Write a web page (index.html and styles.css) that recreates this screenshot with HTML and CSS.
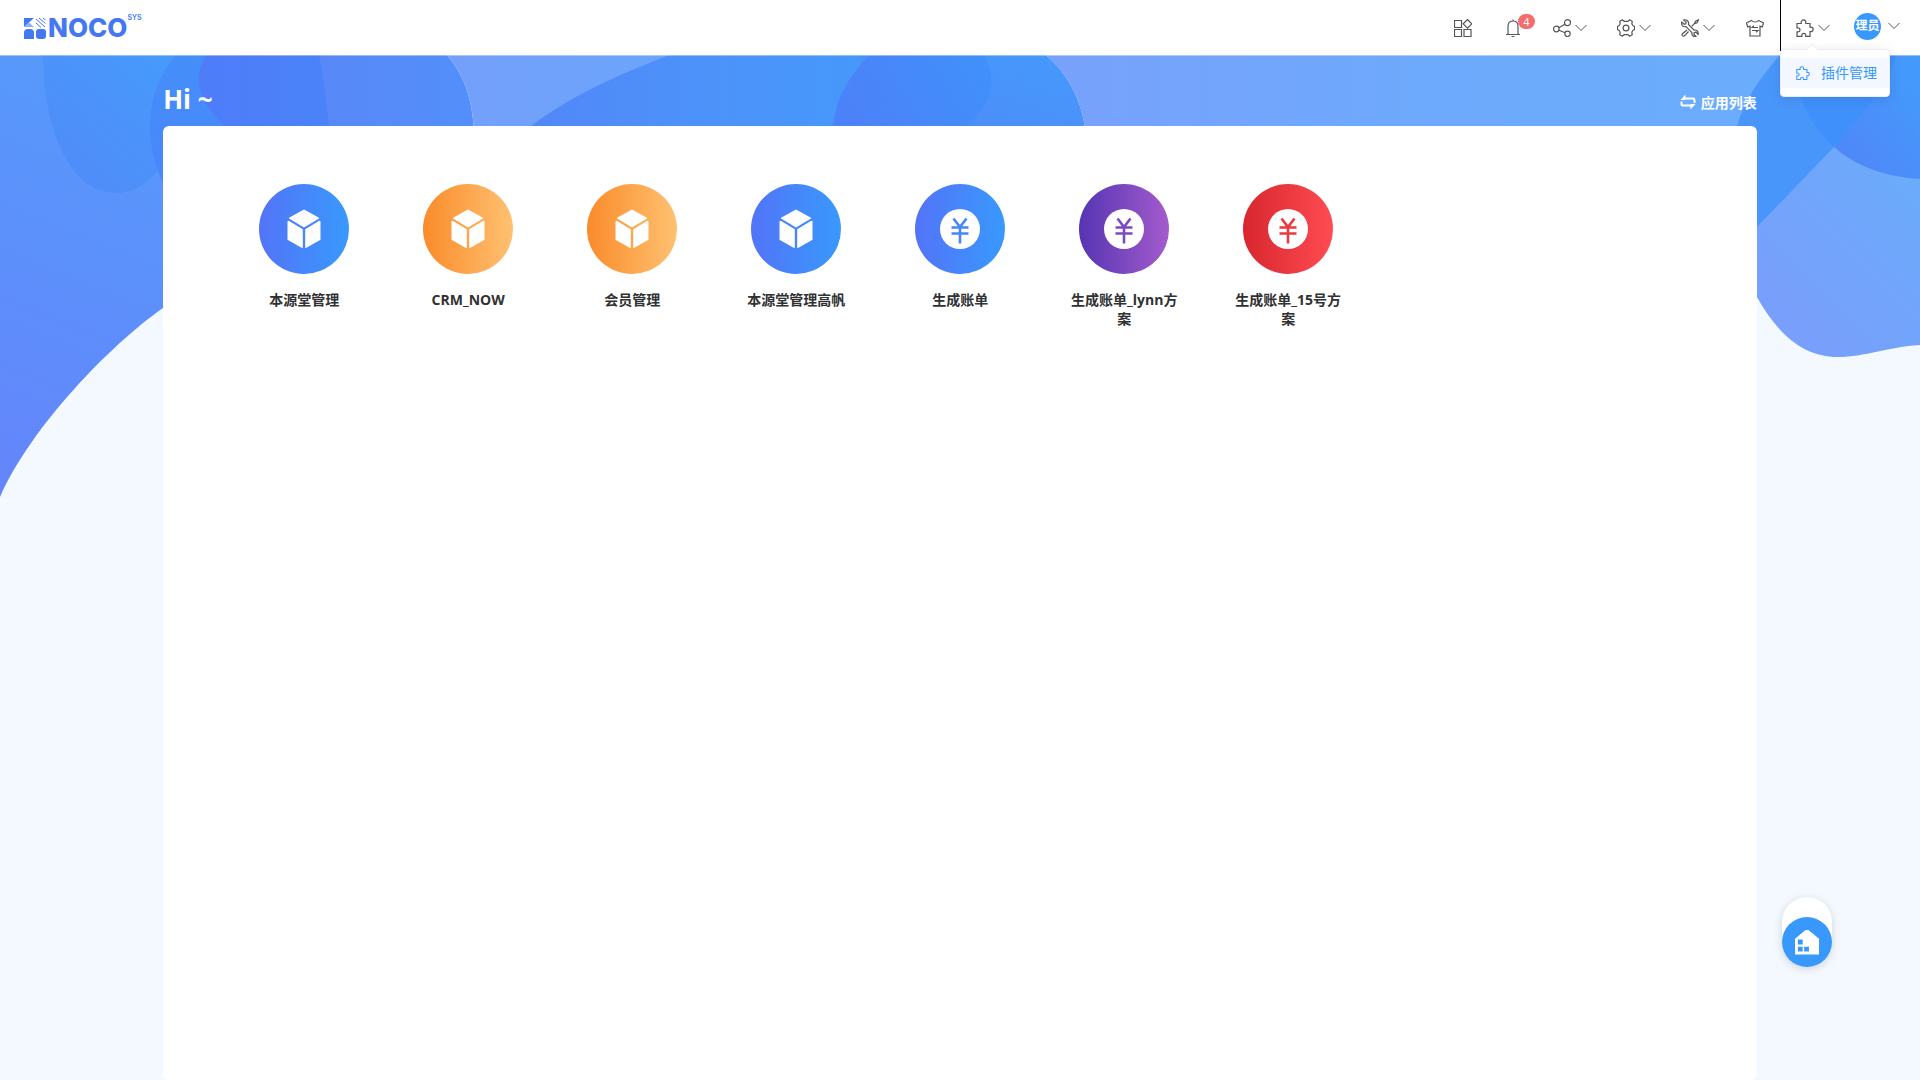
FILE: index.html
```html
<!DOCTYPE html>
<html lang="zh-CN">
<head>
    <meta charset="UTF-8">
    <meta name="viewport" content="width=device-width, initial-scale=1.0">
    <title>NOCO SYS</title>
    <link rel="stylesheet" href="styles.css">
</head>
<body>
    <!-- icons shared by several places -->
    <svg class="sprite" aria-hidden="true">
        <symbol id="arrow" viewBox="0 0 12 8">
            <path d="M.5 1l5.500 5.500L11.500 1"/>
        </symbol>
        <symbol id="puzzle" viewBox="0 0 18 18">
            <path d="M1 4.500h4.200V3.200a2.300 2.300 0 0 1 4.600 0v1.300H14v3.700h1a2.200 2.200 0 0 1 0 4.400h-1v4.700H9.700v-1a1.900 1.900 0 0 0-3.800 0v1H1v-4.400h1a2 2 0 0 0 0-4H1z"/>
        </symbol>
        <symbol id="cube" viewBox="0 0 34 40">
            <path d="M17 .5L32 8.800v.8L17 18.600 2 9.600v-.8z"/>
            <path d="M.5 12.200l1.200-.4L15.800 20.300v18.500l-.8.2L.5 30.700z"/>
            <path d="M33.500 12.200l-1.200-.4L18.200 20.300v18.500l.8.2L33.500 30.700z"/>
        </symbol>
        <symbol id="yen" viewBox="0 0 40 40">
            <circle cx="20" cy="20" r="20"/>
            <path class="yen_line" d="M13.500 9.500l6.500 8.500 6.500-8.500M20 18v16.500M11.500 18.500h17M11.500 24.500h17"/>
        </symbol>
    </svg>

    <header class="header">
        <a class="logo" href="#">
            <svg class="logo_mark" viewBox="0 0 22 22" aria-hidden="true">
                <path d="M0 1h10L0 10z"/>
                <path class="logo_light" d="M5 5.500L10 10H0z"/>
                <path class="logo_stripe" d="M12 6l5 4.500M12 2l9 8M15 1l6.500 5.500M19 1l2.500 2"/>
                <path d="M0 22v-6a4 4 0 0 1 4-4h2a4 4 0 0 1 4 4v6z"/>
                <rect x="12" y="12" width="10" height="10" rx="3"/>
            </svg>
            <span class="logo_text">NOCO</span>
            <span class="logo_sub">SYS</span>
        </a>

        <nav class="tools">
            <button class="tool single" type="button" aria-label="apps">
                <svg class="icon" viewBox="0 0 18 18">
                    <path d="M.5 1.500h7v7h-7zM.5 10.500h7v7h-7zM10 10.500h7v7h-7zM13.500.5l4.300 4.300-4.300 4.300-4.300-4.300z"/>
                </svg>
            </button>
            <button class="tool single" type="button" aria-label="messages">
                <svg class="icon" viewBox="0 0 18 18">
                    <path d="M2 15.500h14M4 15.500V7.200C4 4 6 2 9 2s5 2 5 5.200v8.300M9 2V.5M7.500 17.500h3"/>
                </svg>
                <span class="badge">4</span>
            </button>
            <button class="tool" type="button" aria-label="share">
                <svg class="icon" viewBox="0 0 18 18">
                    <circle cx="3.300" cy="10" r="2.800"/>
                    <circle cx="14.500" cy="3.700" r="3"/>
                    <circle cx="14.500" cy="14.800" r="2.700"/>
                    <path d="M5.800 8.700l6.100-3.400M5.900 11.200l6.200 2.600"/>
                </svg>
                <svg class="arrow"><use href="#arrow"/></svg>
            </button>
            <button class="tool" type="button" aria-label="settings">
                <svg class="icon" viewBox="0 0 18 18">
                    <path d="M5.300.8L7 2.300h4L12.700.8l2.600 1.600-.5 2.400 1.200 2 1.500.6v3.200l-1.500.6-1.200 2 .5 2.400-2.600 1.600L11 15.700H7l-1.700 1.500-2.600-1.600.5-2.400-1.200-2-1.500-.6V7.400L2 6.800l1.200-2-.5-2.400z" stroke-linejoin="round"/>
                    <circle cx="9" cy="9" r="2.900"/>
                </svg>
                <svg class="arrow"><use href="#arrow"/></svg>
            </button>
            <button class="tool" type="button" aria-label="tools">
                <svg class="icon" viewBox="0 0 18 18">
                    <path d="M2.600 1l2.600 2.400-.4 1.400-1.500.5L.8 3.100C0 6.300 2 8.300 5 7.600l6 6c-.7 2.600 1.600 4.500 4 3.800l-2.100-2.300.4-1.500 1.600-.4 2.200 2.300c.6-3-1.300-4.900-4-4.400L7.500 5.500C8.300 2.500 5.500 0 2.600 1z"/>
                    <path d="M10.800 7.400L13.500 4.500l1-2.200 3-1.500L16 3.800l-2.200 1M6 11l-4.300 3.500c-.8.700-.8 1.500-.2 2.200.7.700 1.600.6 2.200-.1L7.500 12.500"/>
                </svg>
                <svg class="arrow"><use href="#arrow"/></svg>
            </button>
            <button class="tool single" type="button" aria-label="theme">
                <svg class="icon" viewBox="0 0 18 18">
                    <path d="M5.500 1.500c1.500 2 5.500 2 7 0L17.600 4l-1.400 4-2.200-.8v9.800H4V7.200L1.800 8 .4 4z"/>
                    <path d="M12 8.500H6l2-1.800M6 11.500h6l-2 1.800"/>
                </svg>
            </button>
            <div class="dropdown">
                <button class="tool" type="button" aria-label="plugins">
                    <svg class="icon"><use href="#puzzle"/></svg>
                    <svg class="arrow"><use href="#arrow"/></svg>
                </button>
                <div class="menu">
                    <a class="menu_item" href="#">
                        <svg class="menu_icon"><use href="#puzzle"/></svg>
                        插件管理
                    </a>
                </div>
            </div>
            <button class="user" type="button">
                <span class="avatar">理员</span>
                <svg class="arrow"><use href="#arrow"/></svg>
            </button>
        </nav>
    </header>

    <main class="main">
        <svg class="waves" viewBox="0 0 1920 445" aria-hidden="true">
            <defs>
                <linearGradient id="g_left" gradientUnits="userSpaceOnUse" x1="0" y1="430" x2="170" y2="0">
                    <stop offset="0" stop-color="#6485fb"/><stop offset="1" stop-color="#559bfb"/>
                </linearGradient>
                <linearGradient id="g_drop" gradientUnits="userSpaceOnUse" x1="70" y1="120" x2="170" y2="10">
                    <stop offset="0" stop-color="#508cf9"/><stop offset="1" stop-color="#469afb"/>
                </linearGradient>
                <linearGradient id="g_blob" gradientUnits="userSpaceOnUse" x1="155" y1="110" x2="200" y2="0">
                    <stop offset="0" stop-color="#4a87fa"/><stop offset="1" stop-color="#448ffa"/>
                </linearGradient>
                <linearGradient id="g_deep">
                    <stop offset="0" stop-color="#4f7cf9"/><stop offset="1" stop-color="#4a83f9"/>
                </linearGradient>
                <linearGradient id="g_mid">
                    <stop offset="0" stop-color="#5988f8"/><stop offset="1" stop-color="#528ffa"/>
                </linearGradient>
                <linearGradient id="g_pale">
                    <stop offset="0" stop-color="#749ffb"/><stop offset="1" stop-color="#6aa5fb"/>
                </linearGradient>
                <linearGradient id="g_hill">
                    <stop offset="0" stop-color="#5287f8"/><stop offset=".6" stop-color="#4b94fa"/><stop offset="1" stop-color="#4599fc"/>
                </linearGradient>
                <linearGradient id="g_ball" x1="0" y1=".3" x2="1" y2="0">
                    <stop offset="0" stop-color="#4c82f9"/><stop offset="1" stop-color="#3f91fb"/>
                </linearGradient>
                <linearGradient id="g_ring" x1="0" y1="1" x2="1" y2="0">
                    <stop offset="0" stop-color="#5089f8"/><stop offset="1" stop-color="#449afc"/>
                </linearGradient>
                <linearGradient id="g_sky">
                    <stop offset="0" stop-color="#78a1fb"/><stop offset=".5" stop-color="#6da9fc"/><stop offset="1" stop-color="#6badfc"/>
                </linearGradient>
                <linearGradient id="g_right" gradientUnits="userSpaceOnUse" x1="1760" y1="230" x2="1880" y2="110">
                    <stop offset="0" stop-color="#789ffb"/><stop offset="1" stop-color="#6caafb"/>
                </linearGradient>
                <linearGradient id="g_corner" gradientUnits="userSpaceOnUse" x1="1840" y1="100" x2="1920" y2="30">
                    <stop offset="0" stop-color="#5087f8"/><stop offset="1" stop-color="#449afc"/>
                </linearGradient>
            </defs>
            <path fill="url(#g_left)" d="M0 0H220V215L163 253C110 290 31 372 0 442Z"/>
            <path fill="url(#g_drop)" d="M43 0C43 70 68 138 116 138C132 138 146 130 157 117L190 0Z"/>
            <path fill="url(#g_blob)" d="M176 0C146 34 142 84 163 128H230V0Z"/>
            <path fill="url(#g_mid)" d="M315 0H447C464 20 473 44 474 80H322Z"/>
            <path fill="url(#g_deep)" d="M206 0C190 26 202 55 233 77H330C326 50 325 28 319 0Z"/>
            <path fill="url(#g_pale)" d="M447 0H680V80H474C473 44 464 20 447 0Z"/>
            <path fill="url(#g_hill)" d="M669 0H890V80H520C560 46 608 24 669 0Z"/>
            <path fill="url(#g_ring)" d="M860 0H1046C1068 19 1082 44 1086 80H860Z"/>
            <path fill="url(#g_ball)" d="M870 0H984C998 26 994 49 960 77H832C835 46 847 22 870 0Z"/>
            <path fill="url(#g_sky)" d="M1046 0H1800V80H1086C1082 44 1068 19 1046 0Z"/>
            <path fill="url(#g_right)" d="M1740 200L1860 0H1920V290C1887 292 1865 302 1838 302C1804 302 1778 280 1757 242L1740 220Z"/>
            <path fill="#4996fb" d="M1780 0C1757 26 1743 48 1736 75V205L1757 172L1834 92C1860 64 1885 34 1897 0Z"/>
            <path fill="url(#g_corner)" d="M1897 0H1920V124C1884 122 1854 110 1834 92C1860 64 1885 34 1897 0Z"/>
            <path fill="#4090fc" d="M1795 0H1897C1885 34 1860 64 1834 92C1808 68 1792 34 1795 0Z"/>
        </svg>

        <div class="content">
            <div class="title">
                <h1 class="hello">Hi ~</h1>
                <a class="switch" href="#">
                    <svg class="switch_icon" viewBox="0 0 16 16">
                        <path d="M3 4.500h10a1.500 1.500 0 0 1 1.500 1.500v3M13 11.500H3A1.500 1.500 0 0 1 1.500 10V7.500"/>
                        <path class="switch_head" d="M5.500.5v5.500H.5zM10.500 15.500V10h5z"/>
                    </svg>
                    应用列表
                </a>
            </div>
            <div class="card">
                <a class="app" href="#">
                    <span class="app_icon blue"><svg class="cube"><use href="#cube"/></svg></span>
                    <span class="app_name">本源堂管理</span>
                </a>
                <a class="app" href="#">
                    <span class="app_icon orange"><svg class="cube"><use href="#cube"/></svg></span>
                    <span class="app_name">CRM_NOW</span>
                </a>
                <a class="app" href="#">
                    <span class="app_icon orange"><svg class="cube"><use href="#cube"/></svg></span>
                    <span class="app_name">会员管理</span>
                </a>
                <a class="app" href="#">
                    <span class="app_icon blue"><svg class="cube"><use href="#cube"/></svg></span>
                    <span class="app_name">本源堂管理高帆</span>
                </a>
                <a class="app" href="#">
                    <span class="app_icon blue"><svg class="yen"><use href="#yen"/></svg></span>
                    <span class="app_name">生成账单</span>
                </a>
                <a class="app" href="#">
                    <span class="app_icon purple"><svg class="yen"><use href="#yen"/></svg></span>
                    <span class="app_name">生成账单_lynn方案</span>
                </a>
                <a class="app" href="#">
                    <span class="app_icon red"><svg class="yen"><use href="#yen"/></svg></span>
                    <span class="app_name">生成账单_15号方案</span>
                </a>
            </div>
        </div>
    </main>

    <div class="float">
        <button class="float_home" type="button" aria-label="home">
            <svg class="home_icon" viewBox="0 0 26 26">
                <path fill-rule="evenodd" d="M0 9.500L11 .5h3l11 9V26H0zM3 10.500v5h5v-5zM3 18v5h5v-5zM9.500 18v5h5v-5z"/>
            </svg>
        </button>
    </div>
</body>
</html>
```
FILE: styles.css
```css
*{
    box-sizing: border-box;
}

body{
    display: flex;
    flex-direction: column;
    min-height: 100vh;
    margin: 0;
    background: #f3f9fe;
    color: #303133;
    font-family: "Open Sans", "Noto Sans CJK SC", sans-serif;
    font-size: 14px;
}

a{
    color: inherit;
    text-decoration: none;
}

button{
    padding: 0;
    border: none;
    background: none;
    font-family: inherit;
    cursor: pointer;
}

svg{
    display: block;
}

.sprite{
    display: none;
}

/* header */
.header{
    position: relative;
    z-index: 2;
    display: flex;
    justify-content: space-between;
    height: 55px;
    padding: 0 20px 0 24px;
    background: #fff;
    box-shadow: 0 1px 0 rgba(255,255,255,.4);
}

.logo{
    display: flex;
    align-items: center;
    color: #4478f2;
    font-family: Inter, sans-serif;
}

.logo_mark{
    width: 22px;
    height: 22px;
    fill: #4478f2;
}

.logo_light{
    fill: #8fb0f8;
}

.logo_stripe{
    fill: none;
    stroke: #4478f2;
    stroke-width: 1;
}

.logo_text{
    margin-left: 2px;
    font-size: 26px;
    font-weight: 800;
}

.logo_sub{
    align-self: flex-start;
    margin-top: 14px;
    font-size: 7px;
    line-height: 8px;
    font-weight: 600;
}

.tools{
    display: flex;
    align-items: stretch;
}

.tool{
    position: relative;
    display: flex;
    align-items: center;
    gap: 4px;
    height: 55px;
    padding: 0 15px;
}

.tool.single{
    padding: 0 16px;
}

.icon{
    width: 18px;
    height: 18px;
    fill: none;
    stroke: #555;
    stroke-width: 1.2;
}

.arrow{
    width: 12px;
    height: 8px;
    fill: none;
    stroke: #555;
    stroke-width: 1;
}

.badge{
    position: absolute;
    top: 14px;
    left: 30px;
    width: 17px;
    height: 15px;
    border-radius: 8px;
    background: #f56c6c;
    color: #fff;
    font-size: 11px;
    line-height: 15px;
    text-align: center;
}

.dropdown{
    position: relative;
    border-left: 1px solid #000;
    height: 51px;
}

.menu{
    position: absolute;
    top: 49px;
    left: -1px;
    z-index: 2;
    width: 110px;
    padding: 8px 0;
    border: 1px solid #ebeef5;
    border-radius: 4px;
    background: #fff;
    box-shadow: 0 2px 12px rgba(0,0,0,.1);
}

.menu::before{
    content: "";
    position: absolute;
    top: -5px;
    left: 27px;
    width: 8px;
    height: 8px;
    border-top: 1px solid #ebeef5;
    border-left: 1px solid #ebeef5;
    background: #fff;
    transform: rotate(45deg);
}

.menu_item{
    display: flex;
    align-items: center;
    gap: 11px;
    height: 30px;
    padding-left: 15px;
    background: #f3f7ff;
    color: #3998fc;
    line-height: 20px;
}

.menu_icon{
    width: 14px;
    height: 14px;
    fill: none;
    stroke: #3998fc;
    stroke-width: 1.3;
}

.user{
    display: flex;
    align-items: center;
    gap: 7px;
    height: 52px;
    padding-left: 9px;
}

.avatar{
    width: 27px;
    height: 27px;
    border-radius: 50%;
    background: #3998fc;
    color: #fff;
    font-size: 12px;
    line-height: 25px;
    font-weight: 700;
}

/* page */
.main{
    position: relative;
    flex: 1;
    display: flex;
    justify-content: center;
}

.waves{
    position: absolute;
    top: 0;
    left: 0;
    width: 100%;
}

.content{
    position: relative;
    display: flex;
    flex-direction: column;
    width: 83%;
}

.title{
    display: flex;
    justify-content: space-between;
    height: 71px;
    color: #fff;
}

.hello{
    margin: 24px 0 0;
    font-size: 26px;
    line-height: 40px;
}

.switch{
    display: flex;
    align-items: center;
    gap: 5px;
    margin-top: 37px;
    height: 20px;
    font-weight: 600;
}

.switch_icon{
    width: 16px;
    height: 16px;
    fill: none;
    stroke: #fff;
    stroke-width: 2;
}

.switch_head{
    fill: #fff;
    stroke: none;
}

.card{
    flex: 1;
    display: flex;
    flex-wrap: wrap;
    align-content: flex-start;
    padding: 58px 59px;
    border-radius: 6px;
    background: #fff;
}

.app{
    display: flex;
    flex-direction: column;
    align-items: center;
    width: 164px;
    padding: 0 27px;
}

.app_icon{
    display: flex;
    align-items: center;
    justify-content: center;
    width: 90px;
    height: 90px;
    border-radius: 50%;
}

.app_name{
    margin-top: 16px;
    font-weight: 700;
    line-height: 19px;
    text-align: center;
}

.cube{
    width: 34px;
    height: 40px;
    fill: #fff;
}

.yen{
    width: 40px;
    height: 40px;
    fill: #fff;
}

.yen_line{
    fill: none;
    stroke-width: 2.6;
}

.blue{
    background: linear-gradient(to right, #5374f8, #3899fd);
    stroke: #4587fa;
}

.orange{
    background: linear-gradient(to right, #fa8b2b, #ffc171);
}

.purple{
    background: linear-gradient(to right, #5535b2, #a45bcd);
    stroke: #7d48c0;
}

.red{
    background: linear-gradient(to right, #d8262f, #ff4c52);
    stroke: #ec393f;
}

.cube, #yen circle{
    stroke: none;
}

/* floating button */
.float{
    position: fixed;
    right: 88px;
    bottom: 113px;
    width: 50px;
    padding-top: 20px;
    border-radius: 25px;
    background: #fff;
    box-shadow: 0 2px 8px rgba(0,0,0,.15);
}

.float_home{
    display: flex;
    align-items: center;
    justify-content: center;
    width: 50px;
    height: 50px;
    border-radius: 50%;
    background: #3998fc;
}

.home_icon{
    width: 25px;
    height: 26px;
    fill: #fff;
}
```
